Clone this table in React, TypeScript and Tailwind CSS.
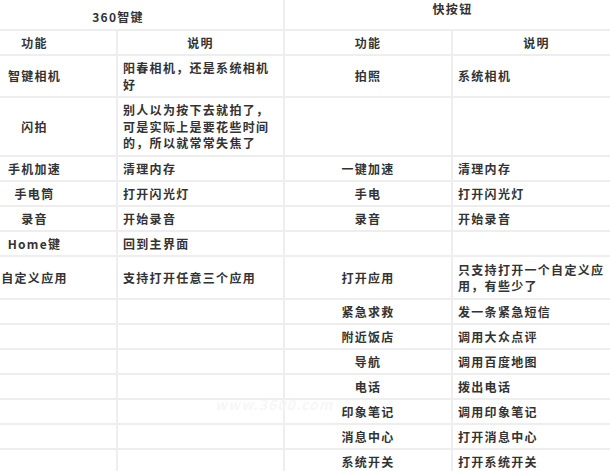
const rows: { h: number; cells: [string, string, string, string] }[] = [
  { h: 42, cells: ['智键相机', '阳春相机，还是系统相机好', '拍照', '系统相机'] },
  { h: 59, cells: ['闪拍', '别人以为按下去就拍了，可是实际上是要花些时间的，所以就常常失焦了', '', ''] },
  { h: 25, cells: ['手机加速', '清理内存', '一键加速', '清理内存'] },
  { h: 25, cells: ['手电筒', '打开闪光灯', '手电', '打开闪光灯'] },
  { h: 25, cells: ['录音', '开始录音', '录音', '开始录音'] },
  { h: 25, cells: ['Home键', '回到主界面', '', ''] },
  { h: 43, cells: ['自定义应用', '支持打开任意三个应用', '打开应用', '只支持打开一个自定义应用，有些少了'] },
  { h: 25, cells: ['', '', '紧急求救', '发一条紧急短信'] },
  { h: 25, cells: ['', '', '附近饭店', '调用大众点评'] },
  { h: 25, cells: ['', '', '导航', '调用百度地图'] },
  { h: 25, cells: ['', '', '电话', '拨出电话'] },
  { h: 25, cells: ['', '', '印象笔记', '调用印象笔记'] },
  { h: 25, cells: ['', '', '消息中心', '打开消息中心'] },
  { h: 25, cells: ['', '', '系统开关', '打开系统开关'] },
]

const line = 'border-b-2 border-[#eeeeee]'
const vline = 'border-r-2 border-[#e6eaf0]'

export default function App() {
  return (
    <div
      className="relative w-[610px] h-[471px] overflow-hidden bg-white text-[12px] font-bold text-[#333333] tracking-[1.3px]"
      style={{ fontFamily: '"Noto Sans CJK SC", "Noto Sans", sans-serif' }}
    >
      <div className="ml-[-47px] w-[667px] grid grid-cols-[165px_167px_168px_167px]">
        {/* top headers */}
        <div className={`col-span-2 h-[31px] ${line} ${vline} flex items-center justify-center pt-[5px]`}>360智键</div>
        <div className={`col-span-2 h-[31px] ${line} flex justify-center`}>快按钮</div>

        {/* sub headers */}
        {['功能', '说明', '功能', '说明'].map((t, i) => (
          <div
            key={i}
            className={`h-[25px] ${line} ${i < 3 ? vline : ''} flex items-center justify-center`}
          >
            {t}
          </div>
        ))}

        {rows.map((r, ri) =>
          r.cells.map((c, ci) => (
            <div
              key={`${ri}-${ci}`}
              style={{ height: r.h }}
              className={`${line} ${ci < 3 ? vline : ''} flex items-center pt-[1px] ${
                ci % 2 === 0 ? 'justify-center' : 'px-[5px]'
              } leading-[16.5px]`}
            >
              {c}
            </div>
          )),
        )}
        {[0, 1, 2, 3].map((i) => (
          <div key={`end-${i}`} className={`h-[25px] ${line} ${i < 3 ? vline : ''}`} />
        ))}
      </div>

      {/* faint watermark */}
      <div className="absolute left-[215px] top-[394px] text-[14px] tracking-[1px] text-[#f7f7f7] font-bold italic">
        www.3600.com
      </div>
    </div>
  )
}
